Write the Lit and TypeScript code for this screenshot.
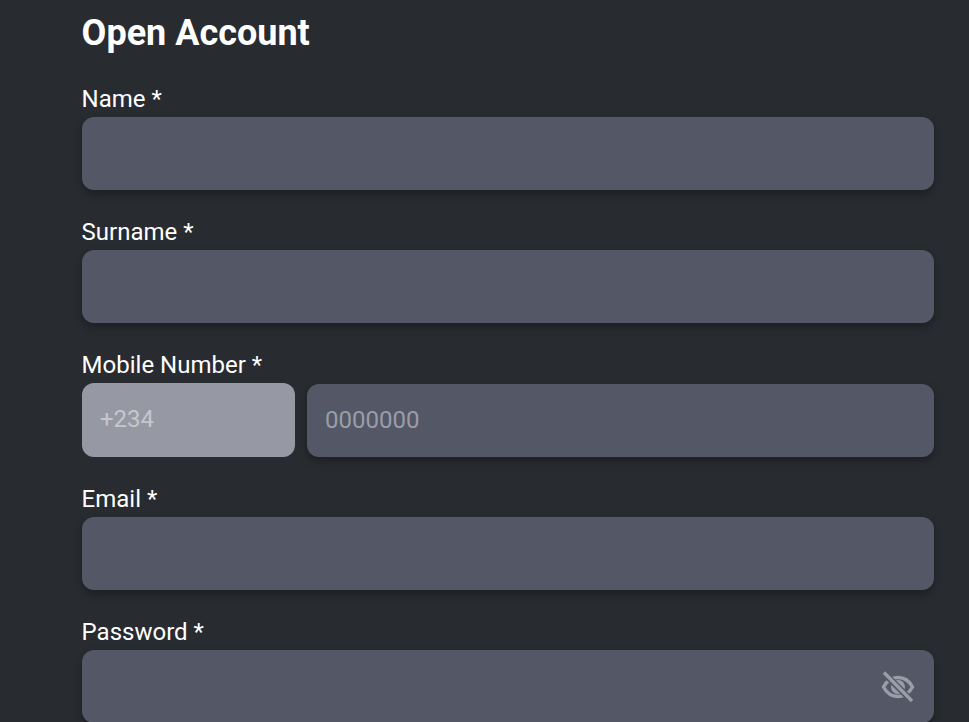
import { LitElement, html, css } from "lit";
import { customElement } from "lit/decorators.js";

@customElement("app-root")
export class AppRoot extends LitElement {
  static styles = css`
    :host {
      display: block;
      height: 722px;
      overflow: hidden;
      background: #282b30;
      font-family: Roboto, "Liberation Sans", sans-serif;
      color: #fff;
    }
    .form {
      display: flex;
      flex-direction: column;
      padding: 0 35px 0 82px;
    }
    h1 {
      margin: 0 0 16px -0.4px;
      height: 66px;
      font-size: 36px;
      line-height: 66px;
      font-weight: 700;
    }
    .field {
      display: flex;
      flex-direction: column;
      margin-bottom: 25px;
    }
    label {
      height: 35px;
      margin-left: -0.4px;
      font-size: 24px;
      line-height: 35px;
      font-weight: 400;
    }
    .box {
      display: flex;
      align-items: center;
      box-sizing: border-box;
      height: 73px;
      padding: 0 18px 2px;
      border-radius: 12px;
      background: #545766;
      box-shadow: 0 4px 8px rgba(0, 0, 0, 0.3);
      font-size: 24px;
      color: #9a9da8;
    }
    .row {
      display: flex;
      align-items: flex-end;
      gap: 12px;
    }
    .code {
      flex: 0 0 213px;
      height: 74px;
      background: #9698a3;
      box-shadow: none;
      color: #c6c7cd;
    }
    .phone {
      flex: 1;
    }
    .pw {
      justify-content: flex-end;
      padding: 0 19px 0 18px;
    }
    svg {
      display: block;
    }
  `;

  private field(name: string) {
    return html`<div class="field"><label>${name} *</label><div class="box"></div></div>`;
  }

  render() {
    return html`
      <div class="form">
        <h1>Open Account</h1>
        ${this.field("Name")}
        ${this.field("Surname")}
        <div class="field">
          <label>Mobile Number *</label>
          <div class="row">
            <div class="box code">+234</div>
            <div class="box phone">0000000</div>
          </div>
        </div>
        ${this.field("Email")}
        <div class="field">
          <label>Password *</label>
          <div class="box pw">
            <svg width="34" height="34" viewBox="0 0 34 34" fill="none" stroke="#9a9da8" stroke-width="3.4">
              <path d="M2.5 17C6 10.5 11 7.5 17 7.5S28 10.5 31.5 17C28 23.500 23 26.500 17 26.500S6 23.500 2.500 17Z" />
              <circle cx="17" cy="17" r="7" fill="#9a9da8" stroke="none" />
              <path d="M3 3L31 31" stroke="#545766" stroke-width="6.5" />
              <path d="M3 2.500L31 31" />
            </svg>
          </div>
        </div>
      </div>
    `;
  }
}
